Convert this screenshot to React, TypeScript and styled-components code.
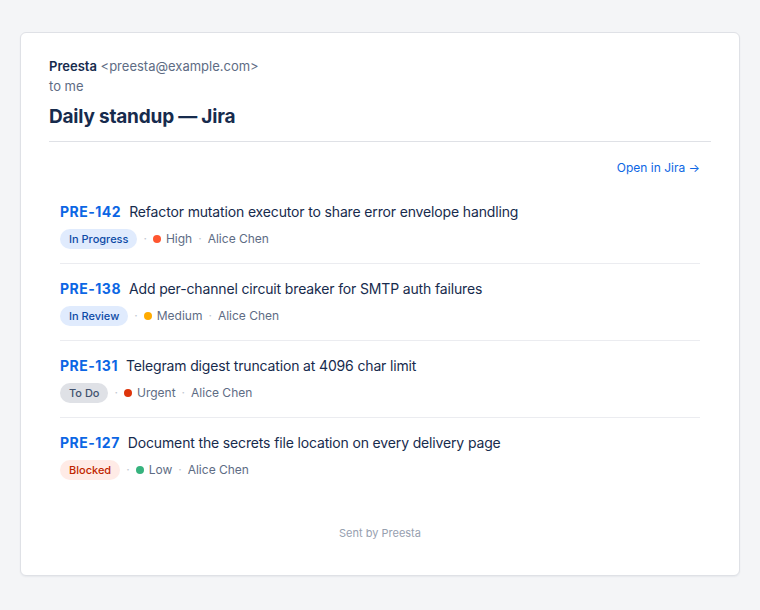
import { FC } from "react";
import styled, { createGlobalStyle } from "styled-components";

const GlobalStyle = createGlobalStyle`
  html, body {
    margin: 0;
    padding: 0;
    background-color: #f4f5f7;
    font-family: Inter, "Noto Sans", sans-serif;
    -webkit-font-smoothing: antialiased;
  }
`;

type Status = "progress" | "review" | "todo" | "blocked";

interface IIssue {
  key: string;
  summary: string;
  status: Status;
  priority: string;
  priorityColor: string;
  assignee: string;
}

const issues: IIssue[] = [
  {
    key: "PRE-142",
    summary: "Refactor mutation executor to share error envelope handling",
    status: "progress",
    priority: "High",
    priorityColor: "#ff5630",
    assignee: "Alice Chen",
  },
  {
    key: "PRE-138",
    summary: "Add per-channel circuit breaker for SMTP auth failures",
    status: "review",
    priority: "Medium",
    priorityColor: "#ffab00",
    assignee: "Alice Chen",
  },
  {
    key: "PRE-131",
    summary: "Telegram digest truncation at 4096 char limit",
    status: "todo",
    priority: "Urgent",
    priorityColor: "#de350b",
    assignee: "Alice Chen",
  },
  {
    key: "PRE-127",
    summary: "Document the secrets file location on every delivery page",
    status: "blocked",
    priority: "Low",
    priorityColor: "#36b37e",
    assignee: "Alice Chen",
  },
];

const statusStyles: Record<Status, { label: string; bg: string; fg: string }> = {
  progress: { label: "In Progress", bg: "#e0ebfd", fg: "#0c4aa6" },
  review: { label: "In Review", bg: "#e0ebfd", fg: "#0c4aa6" },
  todo: { label: "To Do", bg: "#dfe1e6", fg: "#42526e" },
  blocked: { label: "Blocked", bg: "#ffebe6", fg: "#bf2600" },
};

const Page = styled.div`
  padding: 32px 20px 35px;
`;

const Card = styled.div`
  background-color: #ffffff;
  border: 1px solid #dfe1e6;
  border-radius: 6px;
  box-shadow: 0 1px 2px rgba(9, 30, 66, 0.06);
  padding: 23px 28px 34px;
`;

const Header = styled.div`
  border-bottom: 1px solid #dfe1e6;
  padding-bottom: 10px;
`;

const FromLine = styled.div`
  font-size: 13px;
  line-height: 20px;
  color: #5e6c84;
`;

const Sender = styled.span`
  font-weight: 600;
  color: #172b4d;
`;

const Subject = styled.h1`
  margin: 7px 0 0;
  font-size: 19px;
  line-height: 28px;
  font-weight: 700;
  letter-spacing: -0.2px;
  color: #172b4d;
`;

const Body = styled.div`
  padding: 18px 11px 0;
`;

const Toolbar = styled.div`
  display: flex;
  justify-content: flex-end;
  margin-bottom: 11px;
`;

const OpenLink = styled.a`
  font-size: 12px;
  line-height: 16px;
  color: #0c66e4;
  text-decoration: none;
`;

const List = styled.div`
  display: flex;
  flex-direction: column;
`;

const Item = styled.div`
  padding: 15px 0 14px;
  border-top: 1px solid #ebecf0;
  &:first-child {
    border-top: none;
  }
`;

const TitleRow = styled.div`
  display: flex;
  align-items: baseline;
  gap: 8px;
  font-size: 14px;
  line-height: 20px;
`;

const Key = styled.span`
  font-weight: 700;
  letter-spacing: 0.5px;
  color: #0c66e4;
`;

const Summary = styled.span`
  letter-spacing: -0.15px;
  color: #172b4d;
`;

const MetaRow = styled.div`
  display: flex;
  align-items: center;
  margin-top: 7px;
  font-size: 12px;
  line-height: 20px;
  color: #5e6c84;
`;

const Pill = styled.span<{ $bg: string; $fg: string }>`
  display: inline-flex;
  align-items: center;
  height: 20px;
  padding: 0 9px;
  border-radius: 10px;
  background-color: ${({ $bg }) => $bg};
  color: ${({ $fg }) => $fg};
  font-size: 11px;
  font-weight: 500;
`;

const Sep = styled.span`
  color: #c1c7d0;
  margin: 0 6px;
`;

const Dot = styled.span<{ $color: string }>`
  width: 8px;
  height: 8px;
  border-radius: 50%;
  background-color: ${({ $color }) => $color};
  margin-right: 5px;
`;

const Footer = styled.div`
  margin-top: 31px;
  text-align: center;
  font-size: 11px;
  line-height: 16px;
  color: #97a0af;
`;

const IssueRow: FC<{ issue: IIssue }> = ({ issue }) => {
  const status = statusStyles[issue.status];
  return (
    <Item>
      <TitleRow>
        <Key>{issue.key}</Key>
        <Summary>{issue.summary}</Summary>
      </TitleRow>
      <MetaRow>
        <Pill $bg={status.bg} $fg={status.fg}>
          {status.label}
        </Pill>
        <Sep>·</Sep>
        <Dot $color={issue.priorityColor} />
        <span>{issue.priority}</span>
        <Sep>·</Sep>
        <span>{issue.assignee}</span>
      </MetaRow>
    </Item>
  );
};

const App: FC = () => {
  return (
    <>
      <GlobalStyle />
      <Page>
        <Card>
          <Header>
            <FromLine>
              <Sender>Preesta</Sender> &lt;preesta@example.com&gt;
            </FromLine>
            <FromLine>to me</FromLine>
            <Subject>Daily standup — Jira</Subject>
          </Header>
          <Body>
            <Toolbar>
              <OpenLink href="#">Open in Jira →</OpenLink>
            </Toolbar>
            <List>
              {issues.map((issue) => (
                <IssueRow key={issue.key} issue={issue} />
              ))}
            </List>
          </Body>
          <Footer>Sent by Preesta</Footer>
        </Card>
      </Page>
    </>
  );
};

export default App;
